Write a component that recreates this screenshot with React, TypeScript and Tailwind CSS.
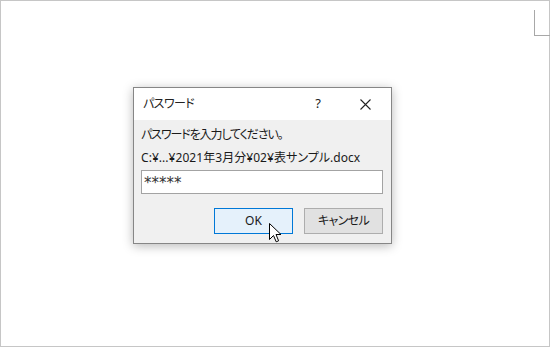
import React from "react";

const jp = "font-['Noto_Sans','Noto_Sans_CJK_JP',sans-serif] [font-feature-settings:'palt']";

function Cursor() {
  return (
    <svg className="absolute left-[268px] top-[222px]" width="14" height="21" viewBox="0 0 14 21">
      <path
        d="M0.5 0.5 L0.5 16.5 L4.5 12.5 L7.2 18.8 L9.6 17.8 L7 11.5 L12 11.5 Z"
        fill="#fff"
        stroke="#000"
        strokeWidth="1"
        strokeLinejoin="miter"
      />
    </svg>
  );
}

export default function App() {
  return (
    <div className={`relative w-[550px] h-[347px] bg-white border border-[#c6c6c6] ${jp}`}>
      {/* page corner mark */}
      <div className="absolute left-[533px] top-[9px] w-[16px] h-[26px] border-l border-b border-[#a8a8a8]" />

      <div className="pl-[132px] pt-[86px]">
        <div className="w-[259px] h-[157px] border border-[#868686] bg-[#f0f0f0] shadow-[0_2px_10px_rgba(0,0,0,0.28)] flex flex-col text-[12px] text-[#1a1a1a]">
          <div className="h-[32px] bg-white flex items-center">
            <span className="pl-[9px] text-[12px] tracking-[-0.6px] text-[#222]">パスワード</span>
            <span className="ml-auto w-[12px] text-center mr-[36px] text-[13px] text-[#222]">?</span>
            <svg className="mr-[20px]" width="11" height="11" viewBox="0 0 11 11">
              <path d="M0.5 0.5 L10.5 10.5 M10.5 0.5 L0.5 10.5" stroke="#222" strokeWidth="1.1" />
            </svg>
          </div>
          <div className="pl-[7px] pr-[8px] pt-[3px] flex flex-col">
            <div className="leading-[23px] tracking-[-1.1px]">パスワードを入力してください。</div>
            <div className="leading-[23px] tracking-[0.05px]">C:¥...¥2021年3月分¥02¥表サンプル.docx</div>
            <div className="mt-[1px] h-[24px] bg-white border border-[#a3a3a3] flex items-center pl-[2px] text-[#333] font-['DejaVu_Sans',sans-serif]">
              <span className="text-[15px] leading-none pt-[2px]">*****</span>
            </div>
            <div className="mt-[14px] flex justify-end gap-[11px]">
              <div className="w-[79px] h-[26px] bg-[#e5f1fb] border border-[#0078d7] flex items-center justify-center text-[12px]">
                OK
              </div>
              <div className="w-[79px] h-[26px] bg-[#e1e1e1] border border-[#adadad] flex items-center justify-center text-[12px] tracking-[-0.6px]">
                キャンセル
              </div>
            </div>
          </div>
        </div>
      </div>
      <Cursor />
    </div>
  );
}
